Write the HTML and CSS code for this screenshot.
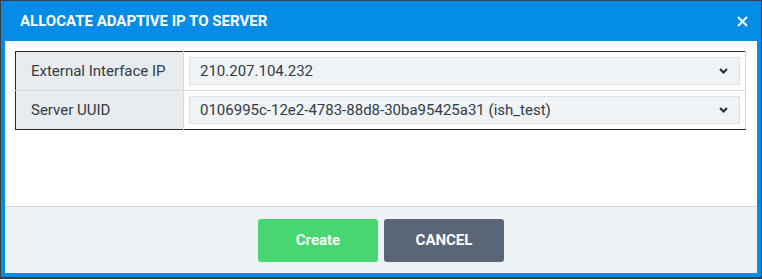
FILE: index.html
```html
<!DOCTYPE html>
<html lang="en">
<head>
  <meta charset="UTF-8">
  <title>Allocate Adaptive IP to Server</title>
  <link rel="stylesheet" href="styles.css">
</head>
<body>
  <div class="modal">
    <div class="modal-header">
      <div class="modal-title">Allocate Adaptive IP to Server</div>
      <button class="close-btn" aria-label="Close">
        <svg width="11" height="11" viewBox="0 0 11 11">
          <path d="M1 1 L10 10 M10 1 L1 10" stroke="#fff" stroke-width="2" fill="none"/>
        </svg>
      </button>
    </div>
    <div class="modal-body">
      <table class="form-table">
        <tbody>
          <tr>
            <th>External Interface IP</th>
            <td>
              <div class="select">
                <span>210.207.104.232</span>
                <svg class="chevron" width="9" height="6" viewBox="0 0 9 6">
                  <path d="M1 1 L4.5 4.5 L8 1" stroke="#222a33" stroke-width="2" fill="none"/>
                </svg>
              </div>
            </td>
          </tr>
          <tr>
            <th>Server UUID</th>
            <td>
              <div class="select">
                <span>0106995c-12e2-4783-88d8-30ba95425a31 (ish_test)</span>
                <svg class="chevron" width="9" height="6" viewBox="0 0 9 6">
                  <path d="M1 1 L4.5 4.5 L8 1" stroke="#222a33" stroke-width="2" fill="none"/>
                </svg>
              </div>
            </td>
          </tr>
        </tbody>
      </table>
    </div>
    <div class="modal-footer">
      <button class="btn btn-create">Create</button>
      <button class="btn btn-cancel">CANCEL</button>
    </div>
  </div>
</body>
</html>
```

FILE: styles.css
```css
body {
  margin: 0;
  padding: 1px 1px 2px 1px;
  background-color: #3a3f45;
  font-family: Roboto, "Liberation Sans", Arial, sans-serif;
}

.modal {
  box-sizing: border-box;
  width: 760px;
  height: 276px;
  background: white;
  border: 4px solid #058ce6;
  border-top: none;
  display: flex;
  flex-direction: column;
}

.modal-header {
  height: 40px;
  background-color: #058ce6;
  display: flex;
  align-items: center;
  justify-content: space-between;
  padding: 0 9px 0 15px;
}

.modal-title {
  color: white;
  font-size: 15px;
  font-weight: bold;
  text-transform: uppercase;
}

.close-btn {
  background: none;
  border: none;
  padding: 0;
  width: 11px;
  height: 11px;
  display: flex;
  cursor: pointer;
}

.modal-body {
  height: 165px;
  box-sizing: border-box;
  padding: 10px 11px 0 10px;
}

.form-table {
  width: 100%;
  border-collapse: collapse;
  border-top: 1px solid #26292d;
  border-bottom: 1px solid #26292d;
  border-left: 1px solid #26292d;
  border-right: 1px solid #cfd4d8;
}

.form-table th {
  width: 152px;
  background-color: #e8ecef;
  color: #333b44;
  font-size: 15px;
  font-weight: normal;
  text-align: left;
  padding: 0 0 0 15px;
  border-right: 1px solid #d5dade;
}

.form-table tr + tr th,
.form-table tr + tr td {
  border-top: 1px solid #d5dade;
}

.form-table td {
  padding: 5px;
  height: 28px;
}

.select {
  box-sizing: border-box;
  height: 28px;
  background-color: #eff3f6;
  border: 1px solid #dde2e6;
  display: flex;
  align-items: center;
  justify-content: space-between;
  padding: 0 11px 0 10px;
  color: #333b44;
  font-size: 15px;
}

.chevron {
  display: block;
}

.modal-footer {
  flex: 1;
  background-color: #eef2f5;
  border-top: 1px solid #d3d9de;
  display: flex;
  justify-content: center;
  align-items: center;
  gap: 6px;
}

.btn {
  width: 120px;
  height: 43px;
  border: none;
  border-radius: 3px;
  color: white;
  font-family: Roboto, "Liberation Sans", Arial, sans-serif;
  font-size: 15px;
  font-weight: bold;
  cursor: pointer;
}

.btn-create {
  background-color: #47d672;
}

.btn-cancel {
  background-color: #5a6677;
}
```
